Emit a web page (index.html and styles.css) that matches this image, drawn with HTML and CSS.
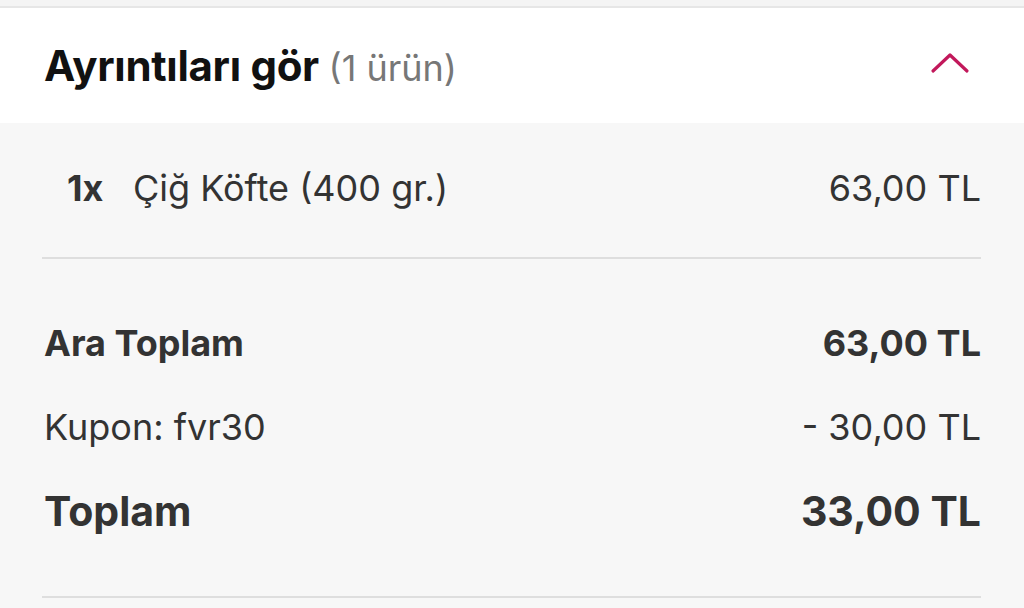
FILE: index.html
```html
<!DOCTYPE html>
<html lang="tr">
<head>
<meta charset="utf-8">
<link rel="stylesheet" href="styles.css">
</head>
<body>
<div class="topstrip"></div>
<header class="head">
  <h1 class="title">Ayrıntıları gör <span class="count">(1 ürün)</span></h1>
  <svg class="chev" width="40" height="24" viewBox="0 0 40 24"><path d="M3 20 L20 4 L37 20" fill="none" stroke="#c2185b" stroke-width="3.2" stroke-linecap="round" stroke-linejoin="round"/></svg>
</header>
<main class="body">
  <section class="items">
    <div class="item">
      <span class="qty">1x</span>
      <span class="name">Çiğ Köfte (400 gr.)</span>
      <span class="price">63,00 TL</span>
    </div>
  </section>
  <section class="summary">
    <div class="row bold"><span>Ara Toplam</span><span>63,00 TL</span></div>
    <div class="row"><span>Kupon: fvr30</span><span>- 30,00 TL</span></div>
    <div class="row bold big"><span>Toplam</span><span>33,00 TL</span></div>
  </section>
</main>
</body>
</html>
```
FILE: styles.css
```css
html, body { margin: 0; padding: 0; }
body {
  background: #f7f7f7;
  font-family: Inter, "Noto Sans", sans-serif;
  color: #333;
  width: 1024px;
  height: 608px;
  overflow: hidden;
}
.topstrip {
  height: 6px;
  background: #f4f4f4;
  border-bottom: 2px solid #e6e6e6;
}
.head {
  background: #fff;
  height: 115px;
  display: flex;
  align-items: center;
  justify-content: space-between;
  padding: 0 54px 0 44px;
}
.title {
  margin: 0;
  font-size: 42px;
  font-weight: 700;
  color: #111;
  letter-spacing: -0.3px;
}
.count {
  font-weight: 400;
  color: #777;
  font-size: 36px;
  letter-spacing: 0;
}
.chev { display: block; margin-top: -6px; }
.body { padding: 0 43px 0 42px; }
.items {
  padding: 40px 0 44px;
  border-bottom: 2px solid #dedede;
}
.item {
  display: flex;
  align-items: center;
  height: 50px;
  font-size: 36px;
  padding-left: 25px;
}
.qty { font-weight: 700; width: 66px; }
.name { flex: 1; }
.summary {
  padding: 42px 0 43px;
  border-bottom: 2px solid #dedede;
}
.row {
  display: flex;
  justify-content: space-between;
  align-items: center;
  height: 84px;
  font-size: 36px;
  padding-left: 2px;
}
.bold { font-weight: 700; }
.big { font-size: 41px; }
```
